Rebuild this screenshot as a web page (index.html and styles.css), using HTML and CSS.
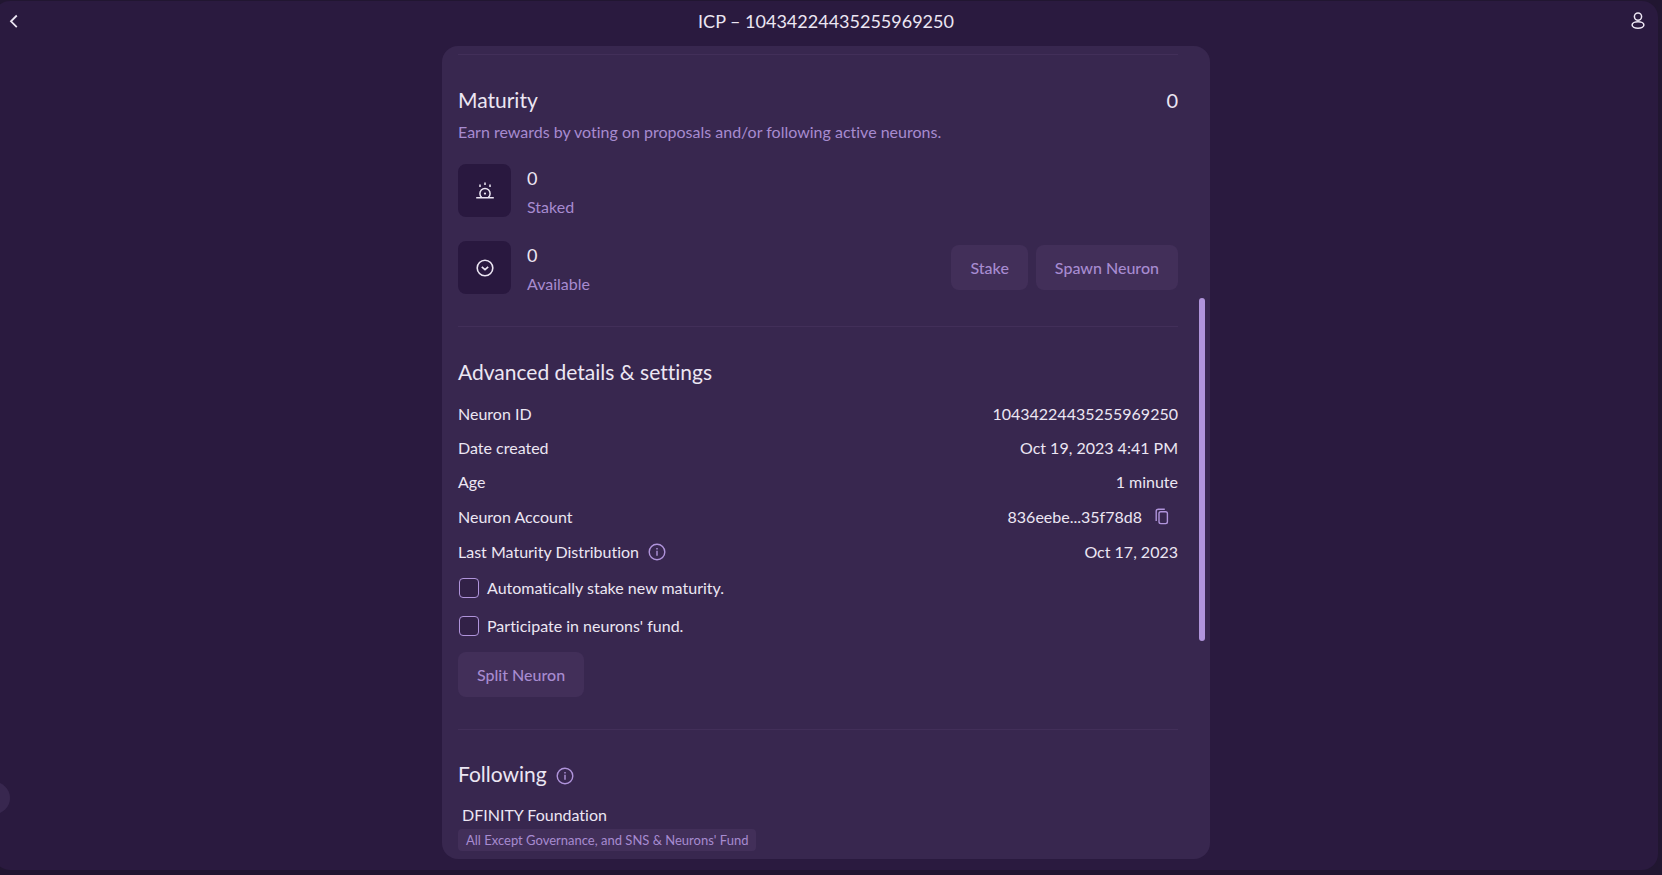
FILE: index.html
```html
<!DOCTYPE html>
<html lang="en">
<head>
<meta charset="utf-8">
<meta name="viewport" content="width=device-width, initial-scale=1">
<title>ICP – 10434224435255969250</title>
<link rel="stylesheet" href="styles.css">
</head>
<body>
<div class="app">
  <header class="toolbar">
    <button class="icon-button" type="button" aria-label="Back">
      <svg width="28" height="28" viewBox="0 0 28 28" fill="none" stroke="currentColor" stroke-width="1.8"><path d="M16.8 8.5 11 14.3 16.8 20.1"/></svg>
    </button>
    <h1 class="toolbar-title">ICP – 10434224435255969250</h1>
    <button class="icon-button" type="button" aria-label="Account">
      <svg width="28" height="28" viewBox="0 0 28 28" fill="none" stroke="currentColor" stroke-width="1.5"><circle cx="14" cy="9.6" r="3.6"/><ellipse cx="14" cy="18" rx="5.9" ry="3.2"/></svg>
    </button>
  </header>

  <main class="panel">
    <div class="content">
      <section class="section maturity">
        <div class="section-head"><h2>Maturity</h2><span class="total">0</span></div>
        <p class="description">Earn rewards by voting on proposals and/or following active neurons.</p>
        <div class="stat">
          <span class="stat-icon">
            <svg width="20" height="20" viewBox="0 0 20 20" fill="none" stroke="currentColor" stroke-width="1.5"><path d="M1.2 16.8h17.6"/><path d="M6.6 16.4a5.1 5.1 0 1 1 6.8 0"/><path d="M10 1.6v2.4M5 3.6v2.4M15 3.6v2.4"/><circle cx="10" cy="12.6" r="1.1" fill="currentColor" stroke="none"/></svg>
          </span>
          <div class="stat-text"><span class="stat-value">0</span><span class="stat-label">Staked</span></div>
        </div>
        <div class="stat">
          <span class="stat-icon">
            <svg width="20" height="20" viewBox="0 0 20 20" fill="none" stroke="currentColor" stroke-width="1.6"><circle cx="10" cy="10" r="7.8"/><path d="m6.8 8.8 3.2 2.9 3.2-2.9"/></svg>
          </span>
          <div class="stat-text"><span class="stat-value">0</span><span class="stat-label">Available</span></div>
          <div class="actions">
            <button class="button" type="button">Stake</button>
            <button class="button" type="button">Spawn Neuron</button>
          </div>
        </div>
      </section>

      <section class="section advanced">
        <h2>Advanced details &amp; settings</h2>
        <dl class="details">
          <div class="row"><dt>Neuron ID</dt><dd>10434224435255969250</dd></div>
          <div class="row"><dt>Date created</dt><dd>Oct 19, 2023 4:41 PM</dd></div>
          <div class="row"><dt>Age</dt><dd>1 minute</dd></div>
          <div class="row row-icon"><dt>Neuron Account</dt><dd>836eebe...35f78d8
            <button class="inline-icon copy" type="button" aria-label="Copy">
              <svg width="20" height="20" viewBox="0 0 20 20" fill="none" stroke="currentColor" stroke-width="1.4"><rect x="7" y="4.8" width="8.4" height="11.8" rx="1.8"/><path d="M4.2 14V4.2a2 2 0 0 1 2-2h6.6"/></svg>
            </button></dd></div>
          <div class="row row-icon"><dt>Last Maturity Distribution
            <button class="inline-icon" type="button" aria-label="About maturity distribution">
              <svg width="20" height="20" viewBox="0 0 20 20" fill="none" stroke="currentColor" stroke-width="1.4"><circle cx="10" cy="10" r="7.8"/><path d="M10 8.8v5M10 6v1.6"/></svg>
            </button></dt><dd>Oct 17, 2023</dd></div>
        </dl>
        <label class="check"><input type="checkbox"><span>Automatically stake new maturity.</span></label>
        <label class="check"><input type="checkbox"><span>Participate in neurons' fund.</span></label>
        <button class="button" type="button">Split Neuron</button>
      </section>

      <section class="section following">
        <h2>Following
          <button class="inline-icon" type="button" aria-label="About following">
            <svg width="20" height="20" viewBox="0 0 20 20" fill="none" stroke="currentColor" stroke-width="1.4"><circle cx="10" cy="10" r="7.8"/><path d="M10 8.8v5M10 6v1.6"/></svg>
          </button>
        </h2>
        <p class="followee">DFINITY Foundation</p>
        <span class="tag">All Except Governance, and SNS &amp; Neurons' Fund</span>
      </section>
    </div>
    <div class="scroll-thumb"></div>
  </main>
  <div class="side-handle"></div>
</div>
<div class="bottom-shade"></div>
</body>
</html>
```
FILE: styles.css
```css
:root {
  --backdrop: #211631;
  --surface: #2a1a3f;
  --panel: #38274f;
  --inset: #29183f;
  --raised: #422f59;
  --accent: #b094db;
  --muted: #a78bd0;
  --text: #ece6f3;
}

* { box-sizing: border-box; }

body {
  margin: 0;
  height: 100vh;
  padding: 1px 4px 5px 0;
  background: var(--backdrop);
  color: var(--text);
  font-family: Lato, "Liberation Sans", sans-serif;
  font-size: 16px;
  line-height: 24px;
  font-variant-ligatures: none;
  overflow: hidden;
}

h1, h2, p, dl, dd { margin: 0; }
h1, h2 { font-weight: 400; }

button {
  font: inherit;
  border: 0;
  padding: 0;
  background: none;
  color: inherit;
  cursor: pointer;
}

svg { display: block; }

.app {
  position: relative;
  display: flex;
  flex-direction: column;
  height: 100%;
  margin-left: -6px;
  padding-bottom: 11px;
  background: var(--surface);
  border-radius: 16px;
  overflow: hidden;
}

.toolbar {
  flex: none;
  display: flex;
  align-items: center;
  justify-content: space-between;
  height: 45px;
  padding: 0 6px 5px;
}

.toolbar-title { font-size: 18px; }

.panel {
  position: relative;
  flex: 1;
  min-height: 0;
  width: 100%;
  max-width: 768px;
  margin: 0 auto;
  padding: 8px 32px 0 16px;
  background: var(--panel);
  border-radius: 16px;
  overflow: hidden;
}

.section { border-top: 1px solid var(--raised); }
.maturity { padding: 31px 0 32px; }
.advanced { padding: 31px 0 32px; }
.following { padding: 30px 0; }

h2 { font-size: 21px; line-height: 28px; }

.section-head {
  display: flex;
  justify-content: space-between;
  line-height: 28px;
}

.total { font-size: 20px; }
.description { margin-top: 6px; color: var(--muted); }

.stat {
  display: flex;
  align-items: center;
  gap: 16px;
  margin-top: 24px;
}

.description + .stat { margin-top: 20px; }

.stat-icon {
  display: grid;
  place-items: center;
  width: 53px;
  height: 53px;
  border-radius: 8px;
  background: var(--inset);
}

.stat-text {
  display: flex;
  flex-direction: column;
  gap: 5px;
  height: 53px;
  padding-top: 2px;
}

.stat-value { font-size: 18px; }
.stat-label { color: var(--muted); }

.actions {
  display: flex;
  gap: 8px;
  margin-left: auto;
}

.button {
  height: 45px;
  padding: 0 19px;
  border-radius: 8px;
  background: var(--raised);
  color: var(--muted);
  font-weight: 500;
}

.details {
  display: flex;
  flex-direction: column;
  gap: 10px;
  margin-top: 16px;
}

.row { display: flex; justify-content: space-between; }
.row dt, .row dd { display: flex; align-items: center; }
.row-icon { height: 25px; }

.inline-icon { margin-left: 8px; color: var(--accent); }
.copy { margin: 0 6px 0 10px; }

.check {
  display: flex;
  align-items: center;
  gap: 8px;
  width: fit-content;
  height: 24px;
  margin-top: 14px;
}

.details + .check { margin-top: 12px; }

.check input {
  appearance: none;
  width: 20px;
  height: 20px;
  margin: 0 0 0 1px;
  border: 1px solid var(--accent);
  border-radius: 4px;
  background: #322147;
}

.advanced > .button { margin-top: 14px; }

.following h2 {
  display: flex;
  align-items: center;
}

.following .inline-icon { margin-top: 4px; }

.followee { margin-top: 15px; padding-left: 4px; }

.tag {
  display: inline-block;
  padding: 0 8px;
  border-radius: 4px;
  background: var(--raised);
  color: var(--muted);
  font-size: 13px;
  line-height: 22px;
}

.scroll-thumb {
  position: absolute;
  top: 31%;
  right: 5px;
  width: 6px;
  height: 42.2%;
  border-radius: 3px;
  background: var(--accent);
}

.side-handle {
  position: absolute;
  left: -16px;
  bottom: 56px;
  width: 32px;
  height: 32px;
  border-radius: 50%;
  background: var(--panel);
}

.bottom-shade {
  position: fixed;
  left: 8%;
  right: 16%;
  bottom: 0;
  height: 32px;
  background: radial-gradient(closest-side at 50% 100%, rgb(0 0 0 / 22%), transparent);
  pointer-events: none;
}
```
